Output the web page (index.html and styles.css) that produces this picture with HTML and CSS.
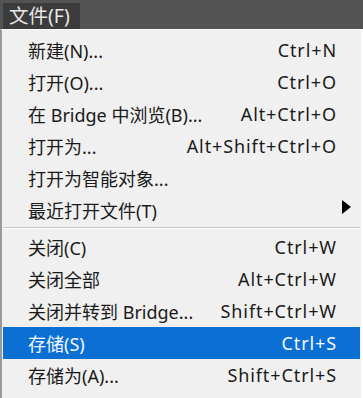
FILE: index.html
```html
<!DOCTYPE html>
<html lang="zh-CN">
<head>
<meta charset="utf-8">
<link rel="stylesheet" href="styles.css">
</head>
<body>
<div class="bar"><div class="tab">文件(F)</div></div>
<div class="menu">
  <div class="item"><span>新建(N)...</span><span class="key">Ctrl+N</span></div>
  <div class="item"><span>打开(O)...</span><span class="key">Ctrl+O</span></div>
  <div class="item"><span>在 Bridge 中浏览(B)...</span><span class="key">Alt+Ctrl+O</span></div>
  <div class="item"><span>打开为...</span><span class="key">Alt+Shift+Ctrl+O</span></div>
  <div class="item"><span>打开为智能对象...</span><span></span></div>
  <div class="item"><span>最近打开文件(T)</span><span class="arrow"></span></div>
  <div class="sep"></div>
  <div class="item"><span>关闭(C)</span><span class="key">Ctrl+W</span></div>
  <div class="item"><span>关闭全部</span><span class="key">Alt+Ctrl+W</span></div>
  <div class="item"><span>关闭并转到 Bridge...</span><span class="key">Shift+Ctrl+W</span></div>
  <div class="item active"><span>存储(S)</span><span class="key">Ctrl+S</span></div>
  <div class="item"><span>存储为(A)...</span><span class="key">Shift+Ctrl+S</span></div>
</div>
</body>
</html>
```
FILE: styles.css
```css
html, body {
  margin: 0;
  padding: 0;
  width: 363px;
  height: 398px;
  overflow: hidden;
  background: #f0f0f0;
  font-family: "Noto Sans", "Noto Sans CJK SC", sans-serif;
}
.bar {
  height: 29px;
  background: #535353;
  padding: 3px 0 0 3px;
  box-sizing: border-box;
  display: flex;
}
.tab {
  width: 77px;
  background: #3b3b3b;
  color: #e8e8e8;
  font-size: 19.5px;
  line-height: 26px;
  padding-left: 6px;
  box-sizing: border-box;
}
.menu {
  height: 369px;
  box-sizing: border-box;
  border-top: 1px solid #fafafa;
  border-left: 2px solid #9a9a9a;
  border-right: 2px solid #fdfdfd;
  padding: 4px 1px 0 1px;
  background: #f0f0f0;
}
.item {
  height: 32px;
  display: flex;
  justify-content: space-between;
  align-items: center;
  padding: 0 24px 0 25px;
  font-size: 18px;
  color: #1a1a1a;
}
.key {
  letter-spacing: 0.9px;
  margin-right: -1px;
}
.item.active {
  background: #0c6fd3;
  color: #f4f8ff;
}
.sep {
  height: 1px;
  background: #c6c6c6;
  border-bottom: 1px solid #ffffff;
  margin: 1px 0 2px 0;
}
.arrow {
  width: 0;
  height: 0;
  border-top: 7px solid transparent;
  border-bottom: 7px solid transparent;
  border-left: 9px solid #000;
  margin-right: -15px;
  margin-top: -7px;
}
```
